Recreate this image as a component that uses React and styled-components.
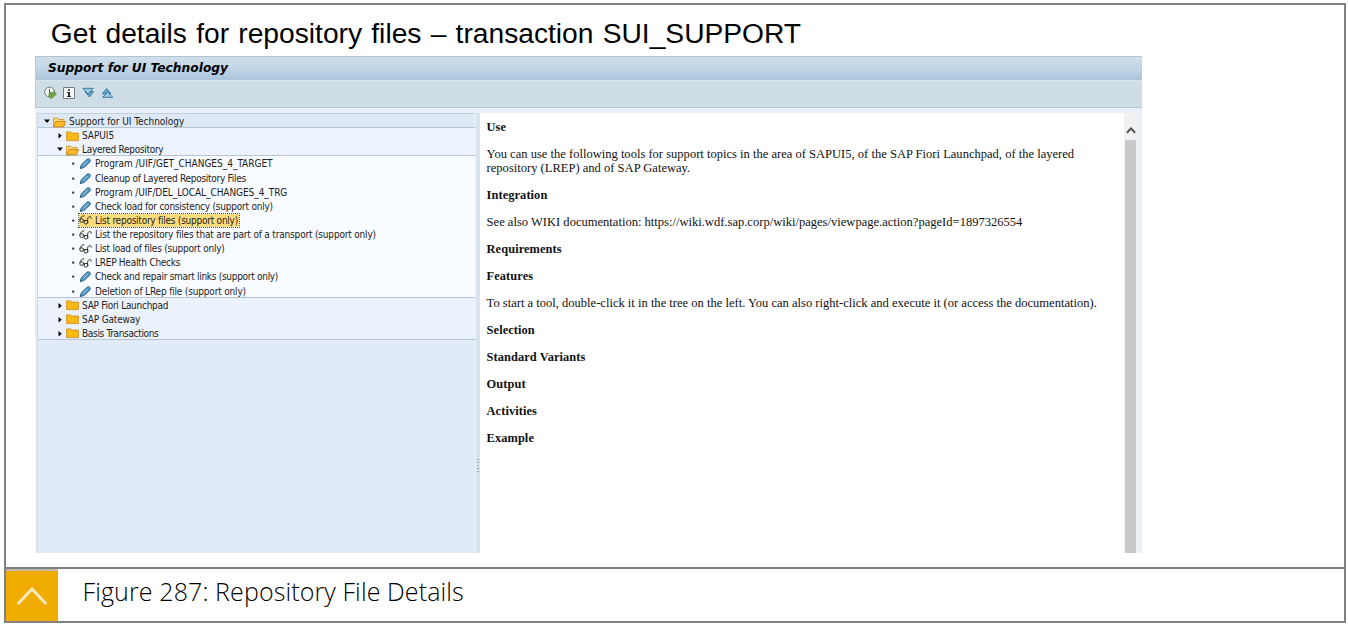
import React from 'react';
import styled, { createGlobalStyle } from 'styled-components';

const GlobalStyle = createGlobalStyle`
  * { box-sizing: border-box; }
  body { margin: 0; background: #fff; color: #000; }
`;

const Page = styled.div`
  width: 1348px;
  height: 625px;
  padding: 3px 2px 2px 4px;
`;

const Frame = styled.div`
  height: 620px;
  display: flex;
  flex-direction: column;
  border: 2px solid #808084;
`;

const Slide = styled.main`
  height: 562px;
  padding-left: 29px;
`;

const Heading = styled.h1`
  height: 51px;
  margin: 0;
  padding: 10px 0 0 15.8px;
  font: 400 28.2px/36px "Liberation Sans", Arial, sans-serif;
  word-spacing: 1.4px;
  white-space: nowrap;
`;

const Window = styled.section`
  width: 1107px;
  height: 497px;
  display: flex;
  flex-direction: column;
  background: #e9f0f7;
`;

const TitleBar = styled.header`
  height: 24px;
  border-top: 1px solid #b3c3cf;
  border-left: 1px solid #b9c9d8;
  padding-left: 12px;
  background: linear-gradient(#d0dfec, #c3d6e4 45%, #aac4dc);
  font: italic 700 12.25px/22px "DejaVu Sans", Verdana, sans-serif;
`;

const Toolbar = styled.div`
  height: 28px;
  display: flex;
  align-items: center;
  gap: 6px;
  padding: 0 0 3px 8px;
  border-top: 1px solid #d9e5ee;
  border-left: 1px solid #b9c9d8;
  border-bottom: 1px solid #b4c6d3;
  background: #cfdde7;
`;

const Icon = styled.svg`
  display: block;
  flex: none;
  width: ${p => p.$w}px;
  height: ${p => p.$h}px;
`;

const Panels = styled.div`
  flex: 1;
  display: flex;
  padding: 5px 5px 0 2px;
`;

const TreePane = styled.nav`
  width: 438px;
  border-top: 1px solid #c3d0de;
  border-left: 1px solid #c9d6e3;
  background: #e1ebf7;
  font: 10px/14px "DejaVu Sans Condensed", "DejaVu Sans", sans-serif;
  color: #1c1c22;
`;

const TreeGroup = styled.div`
  background: ${p => p.$bg};
  box-shadow: inset 0 -1px #b6c5d3;
`;

const TreeRow = styled.div`
  height: 14.13px;
  display: flex;
  align-items: center;
  padding: 2px 0 0 ${p => 6 + p.$level * 13}px;
`;

const Marker = styled.span`
  width: 9px;
  flex: none;
  display: flex;
`;

const Item = styled.span`
  display: flex;
  align-items: center;
  gap: 3px;
  height: 13px;
  padding-right: 1px;
  white-space: nowrap;
  background: ${p => (p.$selected ? '#fbdc7c' : 'transparent')};
  outline: ${p => (p.$selected ? '1px dotted #5c5334' : 'none')};
`;

const Label = styled.span`
  letter-spacing: ${p => p.$track}px;
`;

const Splitter = styled.div`
  width: 4px;
  margin-left: 1px;
  display: flex;
  flex-direction: column;
  align-items: center;
  gap: 2px;
  padding-top: 346px;
  background: #d9e3ec;
`;

const Grip = styled.i`
  width: 2px;
  height: 1px;
  background: #98a5b0;
`;

const Docs = styled.article`
  flex: 1;
  padding: 7px 0 0 6.6px;
  background: #fff;
  font: 12.55px/14.2px "Liberation Serif", "Times New Roman", serif;
  color: #111;
`;

const DocTitle = styled.h2`
  margin: 0 0 12.82px;
  font-size: 12.4px;
  font-weight: 700;
  letter-spacing: 0.08px;
`;

const Paragraph = styled.p`
  margin: 0 0 12.82px;
  white-space: nowrap;
`;

const Scrollbar = styled.div`
  width: 13px;
  display: flex;
  flex-direction: column;
  align-items: center;
  background: #f0f1f2;
`;

const ScrollArrow = styled.div`
  height: 27px;
  padding-top: 13px;
`;

const ScrollThumb = styled.div`
  flex: 1;
  width: 11px;
  background: #c9c9c9;
`;

const CaptionBar = styled.footer`
  height: 54px;
  display: flex;
  border-top: 2px solid #808084;
`;

const Badge = styled.div`
  width: 52px;
  display: flex;
  justify-content: center;
  border-top: 2px solid #c2b8a4;
  padding: 15px 1px 0 0;
  background: #f0ab00;
`;

const Caption = styled.p`
  margin: 0;
  padding-left: 24.6px;
  font: 300 25px/45px "Open Sans", sans-serif;
  letter-spacing: 0.11px;
`;

const Execute = () => (
  <Icon viewBox="0 0 13 13" $w={13} $h={13}>
    <circle cx="5.6" cy="6" r="4.9" fill="#f1f4ee" stroke="#6f7776" />
    <path d="M5.5 3v3.5h2" fill="none" stroke="#555d5a" />
    <path d="M4.8 7.8L7 6.6v1.2l2.6-2.4L12.6 8 7.2 12.8 5 10.6z" fill="#6fa545" stroke="#477b2a" strokeWidth=".5" />
  </Icon>
);

const Info = () => (
  <Icon viewBox="0 0 13 12" $w={13} $h={12}>
    <path d="M.5.5h11v11H.5z" fill="#f5f6f6" stroke="#777d82" />
    <path d="M5 2.2h2v1.6H5zM4 5h3v4h1v1H4V9h1V6H4z" fill="#2a2e31" />
  </Icon>
);

const Expand = () => (
  <Icon viewBox="0 0 13 12" $w={13} $h={12}>
    <path d="M3 4.6h8.6L7.4 10z" fill="#66a9ce" stroke="#2c6f98" strokeWidth=".9" />
    <path d="M.8 1.3h10.4L6 7.2z" fill="#9fcbe2" stroke="#2c6f98" strokeWidth=".9" />
  </Icon>
);

const Collapse = () => (
  <Icon viewBox="0 0 13 12" $w={13} $h={12}>
    <path d="M1.4 6.8L5.6 1.6l4.3 5.2z" fill="#66a9ce" stroke="#2c6f98" strokeWidth=".9" />
    <path d="M1.6 10.3L6.8 5l4.9 5.3z" fill="#9fcbe2" stroke="#2c6f98" strokeWidth=".9" />
  </Icon>
);

const Folder = ({ open }) => (
  <Icon viewBox="0 0 13 11" $w={13} $h={11}>
    {open ? (
      <>
        <path d="M.6 9.9V1.1h3.9l1 1.3h5.4v2" fill="#ffd66b" stroke="#c58a1d" strokeWidth=".8" />
        <path d="M.6 9.9l2.3-5.4h9.6l-1.8 5.4z" fill="#fdb92a" stroke="#c27f12" strokeWidth=".8" />
      </>
    ) : (
      <path d="M.6 9.6V.9h4l1.3 1.2h6.5v7.5z" fill="#fdb913" stroke="#c9891a" strokeWidth=".8" />
    )}
  </Icon>
);

const Pencil = () => (
  <Icon viewBox="0 0 13 12" $w={13} $h={12}>
    <path d="M1.2 10.6l1-3.9L8 1.2c1.2-1 3.5-.4 3.4 1.5.1.6-.2 1.1-.6 1.5L5 9.6z" fill="#4d94c0" stroke="#2b668c" strokeWidth=".8" />
    <path d="M4 7.7l4.8-4.9" stroke="#b3d9ee" strokeWidth="1" />
    <path d="M1.2 10.6l.4-1.7 1.3 1.3z" fill="#1c3c52" />
  </Icon>
);

const Glasses = () => (
  <Icon viewBox="0 0 13 11" $w={13} $h={11}>
    <g fill="none" stroke="#33322c" strokeWidth="1" strokeLinecap="round">
      <circle cx="2.7" cy="5.6" r="1.9" />
      <circle cx="7" cy="7.2" r="1.9" />
      <path d="M4.5 5.5c.4-.5 1-.3 1.2.4M.9 4.8C1.3 2.7 2.8.5 5 .8M8.5 5.9C8.5 2.9 9.5 1.4 10.8 1.5c.9 0 1.4.7 1.4 1.8" />
    </g>
  </Icon>
);

const Arrow = ({ kind }) => (
  <Icon viewBox="0 0 6 6" $w={6} $h={6}>
    {kind === 'open' && <path d="M0 .4h6L3 4z" />}
    {kind === 'closed' && <path d="M1.5 0L4.8 2.7 1.5 5.4z" />}
    {kind === 'leaf' && <path d="M2.2 1.6h2v2h-2z" fill="#2b2b2b" />}
  </Icon>
);

const icons = {
  open: <Folder open />,
  closed: <Folder />,
  edit: <Pencil />,
  view: <Glasses />,
};

function Node({ level, icon, track, selected, children }) {
  const kind = icon === 'open' || icon === 'closed' ? icon : 'leaf';
  return (
    <TreeRow $level={level}>
      <Marker><Arrow kind={kind} /></Marker>
      <Item $selected={selected}>
        {icons[icon]}
        <Label $track={track}>{children}</Label>
      </Item>
    </TreeRow>
  );
}

const leaves = [
  ['edit', -0.02, 'Program /UIF/GET_CHANGES_4_TARGET'],
  ['edit', -0.28, 'Cleanup of Layered Repository Files'],
  ['edit', -0.07, 'Program /UIF/DEL_LOCAL_CHANGES_4_TRG'],
  ['edit', -0.23, 'Check load for consistency (support only)'],
  ['view', -0.24, 'List repository files (support only)'],
  ['view', -0.18, 'List the repository files that are part of a transport (support only)'],
  ['view', -0.22, 'List load of files (support only)'],
  ['view', -0.27, 'LREP Health Checks'],
  ['edit', -0.29, 'Check and repair smart links (support only)'],
  ['edit', -0.17, 'Deletion of LRep file (support only)'],
];

export default function App() {
  return (
    <Page>
      <GlobalStyle />
      <Frame>
        <Slide>
          <Heading>Get details for repository files – transaction SUI_SUPPORT</Heading>
          <Window>
            <TitleBar>Support for UI Technology</TitleBar>
            <Toolbar>
              <Execute />
              <Info />
              <Expand />
              <Collapse />
            </Toolbar>
            <Panels>
              <TreePane>
                <TreeGroup $bg="#dfe9f6">
                  <Node level={0} icon="open" track={-0.03}>Support for UI Technology</Node>
                </TreeGroup>
                <TreeGroup $bg="#edf3fc">
                  <Node level={1} icon="closed" track={-0.06}>SAPUI5</Node>
                  <Node level={1} icon="open" track={-0.3}>Layered Repository</Node>
                </TreeGroup>
                <TreeGroup $bg="#f8fbff">
                  {leaves.map(([icon, track, text]) => (
                    <Node key={text} level={2} icon={icon} track={track} selected={text.startsWith('List repository')}>
                      {text}
                    </Node>
                  ))}
                </TreeGroup>
                <TreeGroup $bg="#ebf2fb">
                  <Node level={1} icon="closed" track={-0.27}>SAP Fiori Launchpad</Node>
                  <Node level={1} icon="closed" track={-0.17}>SAP Gateway</Node>
                  <Node level={1} icon="closed" track={-0.33}>Basis Transactions</Node>
                </TreeGroup>
              </TreePane>
              <Splitter>
                <Grip /><Grip /><Grip /><Grip /><Grip />
              </Splitter>
              <Docs>
                <DocTitle>Use</DocTitle>
                <Paragraph>
                  You can use the following tools for support topics in the area of SAPUI5, of the SAP Fiori Launchpad, of the layered
                  <br />
                  repository (LREP) and of SAP Gateway.
                </Paragraph>
                <DocTitle>Integration</DocTitle>
                <Paragraph>See also WIKI documentation: https://wiki.wdf.sap.corp/wiki/pages/viewpage.action?pageId=1897326554</Paragraph>
                <DocTitle>Requirements</DocTitle>
                <DocTitle>Features</DocTitle>
                <Paragraph>
                  To start a tool, double-click it in the tree on the left. You can also right-click and execute it (or access the documentation).
                </Paragraph>
                <DocTitle>Selection</DocTitle>
                <DocTitle>Standard Variants</DocTitle>
                <DocTitle>Output</DocTitle>
                <DocTitle>Activities</DocTitle>
                <DocTitle>Example</DocTitle>
              </Docs>
              <Scrollbar>
                <ScrollArrow>
                  <Icon viewBox="0 0 10 8" $w={10} $h={8}>
                    <path d="M.9 6.7L5 2.4l4.1 4.3" fill="none" stroke="#505050" strokeWidth="2" />
                  </Icon>
                </ScrollArrow>
                <ScrollThumb />
              </Scrollbar>
            </Panels>
          </Window>
        </Slide>
        <CaptionBar>
          <Badge>
            <Icon viewBox="0 0 32 20" $w={32} $h={20}>
              <path d="M1.8 18L16 3l14.2 15" fill="none" stroke="#fbe9bd" strokeWidth="3" />
            </Icon>
          </Badge>
          <Caption>Figure 287: Repository File Details</Caption>
        </CaptionBar>
      </Frame>
    </Page>
  );
}
